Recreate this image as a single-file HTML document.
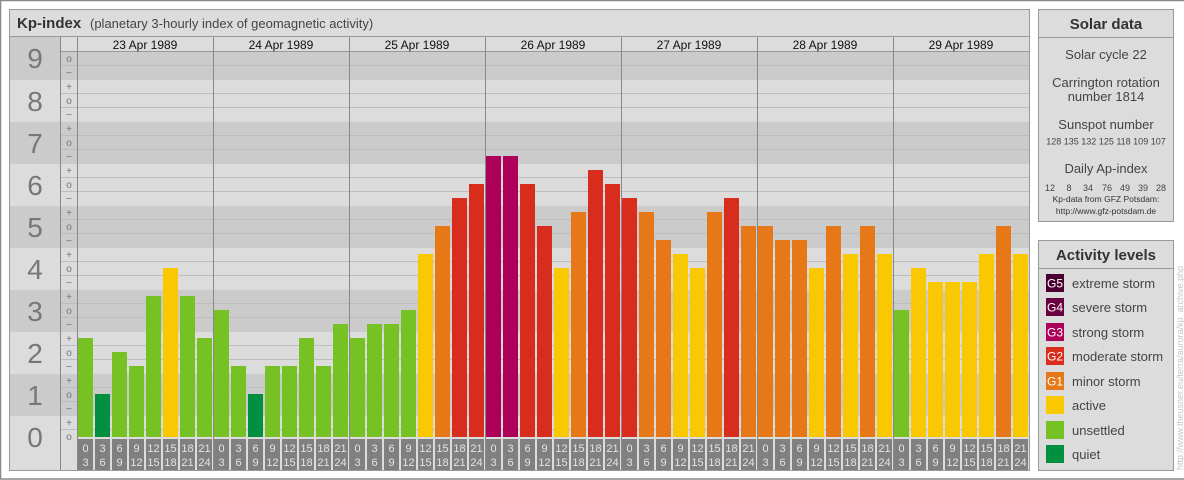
<!DOCTYPE html>
<html><head><meta charset="utf-8"><style>
html,body{margin:0;padding:0;background:#fff;width:1184px;height:480px;overflow:hidden}
svg{display:block;font-family:"Liberation Sans",sans-serif}
</style></head><body>
<svg width="1184" height="480" viewBox="0 0 1184 480" xmlns="http://www.w3.org/2000/svg">
<rect x="0.5" y="0.5" width="1190" height="478.5" fill="#fff" stroke="#888" stroke-width="1.5"/>
<!-- main panel -->
<rect x="9.5" y="9.5" width="1020" height="461" fill="#dcdcdc" stroke="#999"/>
<text x="17" y="28" font-size="15" font-weight="bold" fill="#333">Kp-index</text>
<text x="90" y="28" font-size="13" fill="#444">(planetary 3-hourly index of geomagnetic activity)</text>
<line x1="10" y1="36.5" x2="1029" y2="36.5" stroke="#999"/>
<!-- bands -->
<g fill="#cbcbcb">
<rect x="10" y="37" width="51" height="43"/>
<rect x="61" y="52" width="968" height="28"/>
<rect x="10" y="122" width="1019" height="42"/>
<rect x="10" y="206" width="1019" height="42"/>
<rect x="10" y="290" width="1019" height="42"/>
<rect x="10" y="374" width="1019" height="42"/>
</g>
<line x1="61" y1="51.5" x2="1029" y2="51.5" stroke="#999"/>
<g stroke="#bdbdbd" stroke-width="1">
<line x1="61" x2="1029" y1="65.5" y2="65.5"/>
<line x1="61" x2="1029" y1="93.5" y2="93.5"/><line x1="61" x2="1029" y1="107.5" y2="107.5"/>
<line x1="61" x2="1029" y1="135.5" y2="135.5"/><line x1="61" x2="1029" y1="149.5" y2="149.5"/>
<line x1="61" x2="1029" y1="177.5" y2="177.5"/><line x1="61" x2="1029" y1="191.5" y2="191.5"/>
<line x1="61" x2="1029" y1="219.5" y2="219.5"/><line x1="61" x2="1029" y1="233.5" y2="233.5"/>
<line x1="61" x2="1029" y1="261.5" y2="261.5"/><line x1="61" x2="1029" y1="275.5" y2="275.5"/>
<line x1="61" x2="1029" y1="303.5" y2="303.5"/><line x1="61" x2="1029" y1="317.5" y2="317.5"/>
<line x1="61" x2="1029" y1="345.5" y2="345.5"/><line x1="61" x2="1029" y1="359.5" y2="359.5"/>
<line x1="61" x2="1029" y1="387.5" y2="387.5"/><line x1="61" x2="1029" y1="401.5" y2="401.5"/>
<line x1="61" x2="1029" y1="429.5" y2="429.5"/>
</g>
<!-- big digits -->
<g font-size="28" fill="#777" text-anchor="middle">
<text x="35" y="68">9</text><text x="35" y="111">8</text><text x="35" y="153">7</text><text x="35" y="195">6</text><text x="35" y="237">5</text><text x="35" y="279">4</text><text x="35" y="321">3</text><text x="35" y="363">2</text><text x="35" y="405">1</text><text x="35" y="447">0</text>
</g>
<!-- sub labels -->
<g font-size="10" fill="#777" text-anchor="middle">
<text x="69" y="62">o</text><text x="69" y="76">−</text>
<text x="69" y="90">+</text><text x="69" y="104">o</text><text x="69" y="118">−</text>
<text x="69" y="132">+</text><text x="69" y="146">o</text><text x="69" y="160">−</text>
<text x="69" y="174">+</text><text x="69" y="188">o</text><text x="69" y="202">−</text>
<text x="69" y="216">+</text><text x="69" y="230">o</text><text x="69" y="244">−</text>
<text x="69" y="258">+</text><text x="69" y="272">o</text><text x="69" y="286">−</text>
<text x="69" y="300">+</text><text x="69" y="314">o</text><text x="69" y="328">−</text>
<text x="69" y="342">+</text><text x="69" y="356">o</text><text x="69" y="370">−</text>
<text x="69" y="384">+</text><text x="69" y="398">o</text><text x="69" y="412">−</text>
<text x="69" y="426">+</text><text x="69" y="440">o</text>
</g>
<!-- bars -->
<g>
<rect x="78" y="338" width="15" height="99" fill="#76c123"/>
<rect x="95" y="394" width="15" height="43" fill="#009040"/>
<rect x="112" y="352" width="15" height="85" fill="#76c123"/>
<rect x="129" y="366" width="15" height="71" fill="#76c123"/>
<rect x="146" y="296" width="15" height="141" fill="#76c123"/>
<rect x="163" y="268" width="15" height="169" fill="#fac800"/>
<rect x="180" y="296" width="15" height="141" fill="#76c123"/>
<rect x="197" y="338" width="15" height="99" fill="#76c123"/>

<rect x="214" y="310" width="15" height="127" fill="#76c123"/>
<rect x="231" y="366" width="15" height="71" fill="#76c123"/>
<rect x="248" y="394" width="15" height="43" fill="#009040"/>
<rect x="265" y="366" width="15" height="71" fill="#76c123"/>
<rect x="282" y="366" width="15" height="71" fill="#76c123"/>
<rect x="299" y="338" width="15" height="99" fill="#76c123"/>
<rect x="316" y="366" width="15" height="71" fill="#76c123"/>
<rect x="333" y="324" width="15" height="113" fill="#76c123"/>

<rect x="350" y="338" width="15" height="99" fill="#76c123"/>
<rect x="367" y="324" width="15" height="113" fill="#76c123"/>
<rect x="384" y="324" width="15" height="113" fill="#76c123"/>
<rect x="401" y="310" width="15" height="127" fill="#76c123"/>
<rect x="418" y="254" width="15" height="183" fill="#fac800"/>
<rect x="435" y="226" width="15" height="211" fill="#e67817"/>
<rect x="452" y="198" width="15" height="239" fill="#d82c1c"/>
<rect x="469" y="184" width="15" height="253" fill="#d82c1c"/>

<rect x="486" y="156" width="15" height="281" fill="#ad0058"/>
<rect x="503" y="156" width="15" height="281" fill="#ad0058"/>
<rect x="520" y="184" width="15" height="253" fill="#d82c1c"/>
<rect x="537" y="226" width="15" height="211" fill="#d82c1c"/>
<rect x="554" y="268" width="15" height="169" fill="#fac800"/>
<rect x="571" y="212" width="15" height="225" fill="#e67817"/>
<rect x="588" y="170" width="15" height="267" fill="#d82c1c"/>
<rect x="605" y="184" width="15" height="253" fill="#d82c1c"/>

<rect x="622" y="198" width="15" height="239" fill="#d82c1c"/>
<rect x="639" y="212" width="15" height="225" fill="#e67817"/>
<rect x="656" y="240" width="15" height="197" fill="#e67817"/>
<rect x="673" y="254" width="15" height="183" fill="#fac800"/>
<rect x="690" y="268" width="15" height="169" fill="#fac800"/>
<rect x="707" y="212" width="15" height="225" fill="#e67817"/>
<rect x="724" y="198" width="15" height="239" fill="#d82c1c"/>
<rect x="741" y="226" width="15" height="211" fill="#e67817"/>

<rect x="758" y="226" width="15" height="211" fill="#e67817"/>
<rect x="775" y="240" width="15" height="197" fill="#e67817"/>
<rect x="792" y="240" width="15" height="197" fill="#e67817"/>
<rect x="809" y="268" width="15" height="169" fill="#fac800"/>
<rect x="826" y="226" width="15" height="211" fill="#e67817"/>
<rect x="843" y="254" width="15" height="183" fill="#fac800"/>
<rect x="860" y="226" width="15" height="211" fill="#e67817"/>
<rect x="877" y="254" width="15" height="183" fill="#fac800"/>

<rect x="894" y="310" width="15" height="127" fill="#76c123"/>
<rect x="911" y="268" width="15" height="169" fill="#fac800"/>
<rect x="928" y="282" width="15" height="155" fill="#fac800"/>
<rect x="945" y="282" width="15" height="155" fill="#fac800"/>
<rect x="962" y="282" width="15" height="155" fill="#fac800"/>
<rect x="979" y="254" width="15" height="183" fill="#fac800"/>
<rect x="996" y="226" width="15" height="211" fill="#e67817"/>
<rect x="1013" y="254" width="15" height="183" fill="#fac800"/>
</g>
<!-- time label boxes -->
<g fill="#808080">
<rect x="78" y="439" width="15" height="31"/><rect x="95" y="439" width="15" height="31"/><rect x="112" y="439" width="15" height="31"/><rect x="129" y="439" width="15" height="31"/><rect x="146" y="439" width="15" height="31"/><rect x="163" y="439" width="15" height="31"/><rect x="180" y="439" width="15" height="31"/><rect x="197" y="439" width="15" height="31"/>
<rect x="214" y="439" width="15" height="31"/><rect x="231" y="439" width="15" height="31"/><rect x="248" y="439" width="15" height="31"/><rect x="265" y="439" width="15" height="31"/><rect x="282" y="439" width="15" height="31"/><rect x="299" y="439" width="15" height="31"/><rect x="316" y="439" width="15" height="31"/><rect x="333" y="439" width="15" height="31"/>
<rect x="350" y="439" width="15" height="31"/><rect x="367" y="439" width="15" height="31"/><rect x="384" y="439" width="15" height="31"/><rect x="401" y="439" width="15" height="31"/><rect x="418" y="439" width="15" height="31"/><rect x="435" y="439" width="15" height="31"/><rect x="452" y="439" width="15" height="31"/><rect x="469" y="439" width="15" height="31"/>
<rect x="486" y="439" width="15" height="31"/><rect x="503" y="439" width="15" height="31"/><rect x="520" y="439" width="15" height="31"/><rect x="537" y="439" width="15" height="31"/><rect x="554" y="439" width="15" height="31"/><rect x="571" y="439" width="15" height="31"/><rect x="588" y="439" width="15" height="31"/><rect x="605" y="439" width="15" height="31"/>
<rect x="622" y="439" width="15" height="31"/><rect x="639" y="439" width="15" height="31"/><rect x="656" y="439" width="15" height="31"/><rect x="673" y="439" width="15" height="31"/><rect x="690" y="439" width="15" height="31"/><rect x="707" y="439" width="15" height="31"/><rect x="724" y="439" width="15" height="31"/><rect x="741" y="439" width="15" height="31"/>
<rect x="758" y="439" width="15" height="31"/><rect x="775" y="439" width="15" height="31"/><rect x="792" y="439" width="15" height="31"/><rect x="809" y="439" width="15" height="31"/><rect x="826" y="439" width="15" height="31"/><rect x="843" y="439" width="15" height="31"/><rect x="860" y="439" width="15" height="31"/><rect x="877" y="439" width="15" height="31"/>
<rect x="894" y="439" width="15" height="31"/><rect x="911" y="439" width="15" height="31"/><rect x="928" y="439" width="15" height="31"/><rect x="945" y="439" width="15" height="31"/><rect x="962" y="439" width="15" height="31"/><rect x="979" y="439" width="15" height="31"/><rect x="996" y="439" width="15" height="31"/><rect x="1013" y="439" width="15" height="31"/>
</g>
<g font-size="11" fill="#e4e4e4" text-anchor="middle">
<text x="85.5" y="452">0</text><text x="85.5" y="466">3</text><text x="102.5" y="452">3</text><text x="102.5" y="466">6</text><text x="119.5" y="452">6</text><text x="119.5" y="466">9</text><text x="136.5" y="452">9</text><text x="136.5" y="466">12</text><text x="153.5" y="452">12</text><text x="153.5" y="466">15</text><text x="170.5" y="452">15</text><text x="170.5" y="466">18</text><text x="187.5" y="452">18</text><text x="187.5" y="466">21</text><text x="204.5" y="452">21</text><text x="204.5" y="466">24</text>
<text x="221.5" y="452">0</text><text x="221.5" y="466">3</text><text x="238.5" y="452">3</text><text x="238.5" y="466">6</text><text x="255.5" y="452">6</text><text x="255.5" y="466">9</text><text x="272.5" y="452">9</text><text x="272.5" y="466">12</text><text x="289.5" y="452">12</text><text x="289.5" y="466">15</text><text x="306.5" y="452">15</text><text x="306.5" y="466">18</text><text x="323.5" y="452">18</text><text x="323.5" y="466">21</text><text x="340.5" y="452">21</text><text x="340.5" y="466">24</text>
<text x="357.5" y="452">0</text><text x="357.5" y="466">3</text><text x="374.5" y="452">3</text><text x="374.5" y="466">6</text><text x="391.5" y="452">6</text><text x="391.5" y="466">9</text><text x="408.5" y="452">9</text><text x="408.5" y="466">12</text><text x="425.5" y="452">12</text><text x="425.5" y="466">15</text><text x="442.5" y="452">15</text><text x="442.5" y="466">18</text><text x="459.5" y="452">18</text><text x="459.5" y="466">21</text><text x="476.5" y="452">21</text><text x="476.5" y="466">24</text>
<text x="493.5" y="452">0</text><text x="493.5" y="466">3</text><text x="510.5" y="452">3</text><text x="510.5" y="466">6</text><text x="527.5" y="452">6</text><text x="527.5" y="466">9</text><text x="544.5" y="452">9</text><text x="544.5" y="466">12</text><text x="561.5" y="452">12</text><text x="561.5" y="466">15</text><text x="578.5" y="452">15</text><text x="578.5" y="466">18</text><text x="595.5" y="452">18</text><text x="595.5" y="466">21</text><text x="612.5" y="452">21</text><text x="612.5" y="466">24</text>
<text x="629.5" y="452">0</text><text x="629.5" y="466">3</text><text x="646.5" y="452">3</text><text x="646.5" y="466">6</text><text x="663.5" y="452">6</text><text x="663.5" y="466">9</text><text x="680.5" y="452">9</text><text x="680.5" y="466">12</text><text x="697.5" y="452">12</text><text x="697.5" y="466">15</text><text x="714.5" y="452">15</text><text x="714.5" y="466">18</text><text x="731.5" y="452">18</text><text x="731.5" y="466">21</text><text x="748.5" y="452">21</text><text x="748.5" y="466">24</text>
<text x="765.5" y="452">0</text><text x="765.5" y="466">3</text><text x="782.5" y="452">3</text><text x="782.5" y="466">6</text><text x="799.5" y="452">6</text><text x="799.5" y="466">9</text><text x="816.5" y="452">9</text><text x="816.5" y="466">12</text><text x="833.5" y="452">12</text><text x="833.5" y="466">15</text><text x="850.5" y="452">15</text><text x="850.5" y="466">18</text><text x="867.5" y="452">18</text><text x="867.5" y="466">21</text><text x="884.5" y="452">21</text><text x="884.5" y="466">24</text>
<text x="901.5" y="452">0</text><text x="901.5" y="466">3</text><text x="918.5" y="452">3</text><text x="918.5" y="466">6</text><text x="935.5" y="452">6</text><text x="935.5" y="466">9</text><text x="952.5" y="452">9</text><text x="952.5" y="466">12</text><text x="969.5" y="452">12</text><text x="969.5" y="466">15</text><text x="986.5" y="452">15</text><text x="986.5" y="466">18</text><text x="1003.5" y="452">18</text><text x="1003.5" y="466">21</text><text x="1020.5" y="452">21</text><text x="1020.5" y="466">24</text>
</g>
<!-- vertical separators -->
<g stroke="#888" stroke-width="1">
<line x1="60.5" y1="37" x2="60.5" y2="470"/>
<line x1="77.5" y1="37" x2="77.5" y2="470"/>
<line x1="213.5" y1="37" x2="213.5" y2="470"/>
<line x1="349.5" y1="37" x2="349.5" y2="470"/>
<line x1="485.5" y1="37" x2="485.5" y2="470"/>
<line x1="621.5" y1="37" x2="621.5" y2="470"/>
<line x1="757.5" y1="37" x2="757.5" y2="470"/>
<line x1="893.5" y1="37" x2="893.5" y2="470"/>
</g>
<g font-size="12" fill="#111" text-anchor="middle">
<text x="145" y="49">23 Apr 1989</text><text x="281" y="49">24 Apr 1989</text><text x="417" y="49">25 Apr 1989</text><text x="553" y="49">26 Apr 1989</text><text x="689" y="49">27 Apr 1989</text><text x="825" y="49">28 Apr 1989</text><text x="961" y="49">29 Apr 1989</text>
</g>
<!-- solar data -->
<rect x="1038.5" y="9.5" width="135" height="212" fill="#dcdcdc" stroke="#999"/>
<line x1="1039" y1="37.5" x2="1173" y2="37.5" stroke="#999"/>
<g text-anchor="middle">
<text x="1106" y="29" font-size="15" font-weight="bold" fill="#333">Solar data</text>
<g font-size="13" fill="#444">
<text x="1106" y="59">Solar cycle 22</text>
<text x="1106" y="87">Carrington rotation</text>
<text x="1106" y="101">number 1814</text>
<text x="1106" y="129">Sunspot number</text>
<text x="1106" y="173">Daily Ap-index</text>
</g>
<text x="1106" y="144.5" font-size="9" fill="#444">128 135 132 125 118 109 107</text>
<g font-size="9" fill="#444">
<text x="1050" y="191">12</text><text x="1069" y="191">8</text><text x="1088" y="191">34</text><text x="1107" y="191">76</text><text x="1125" y="191">49</text><text x="1143" y="191">39</text><text x="1161" y="191">28</text>
</g>
<text x="1106" y="202" font-size="8.5" fill="#333">Kp-data from GFZ Potsdam:</text>
<text x="1106" y="214" font-size="8.5" fill="#333">http://www.gfz-potsdam.de</text>
</g>
<!-- activity levels -->
<rect x="1038.5" y="240.5" width="135" height="230" fill="#dcdcdc" stroke="#999"/>
<line x1="1039" y1="268.5" x2="1173" y2="268.5" stroke="#999"/>
<text x="1106" y="260" font-size="15" font-weight="bold" fill="#333" text-anchor="middle">Activity levels</text>
<rect x="1046" y="274" width="18" height="18" fill="#4a0030"/>
<rect x="1046" y="298" width="18" height="18" fill="#6a0040"/>
<rect x="1046" y="323" width="18" height="18" fill="#ad0058"/>
<rect x="1046" y="347" width="18" height="18" fill="#d82c1c"/>
<rect x="1046" y="372" width="18" height="18" fill="#e67817"/>
<rect x="1046" y="396" width="18" height="18" fill="#fac800"/>
<rect x="1046" y="421" width="18" height="18" fill="#76c123"/>
<rect x="1046" y="445" width="18" height="18" fill="#009040"/>
<g font-size="12" fill="#fff" text-anchor="middle">
<text x="1055" y="287.5">G5</text><text x="1055" y="311.5">G4</text><text x="1055" y="336.5">G3</text><text x="1055" y="360.5">G2</text><text x="1055" y="385.5">G1</text>
</g>
<g font-size="13" fill="#444">
<text x="1072" y="288">extreme storm</text>
<text x="1072" y="312">severe storm</text>
<text x="1072" y="337">strong storm</text>
<text x="1072" y="361">moderate storm</text>
<text x="1072" y="386">minor storm</text>
<text x="1072" y="410">active</text>
<text x="1072" y="435">unsettled</text>
<text x="1072" y="459">quiet</text>
</g>
<text transform="translate(1183,470) rotate(-90)" font-size="9" fill="#c4c4c4">http://www.theusner.eu/terra/aurora/kp_archive.php</text>
</svg>
</body></html>
